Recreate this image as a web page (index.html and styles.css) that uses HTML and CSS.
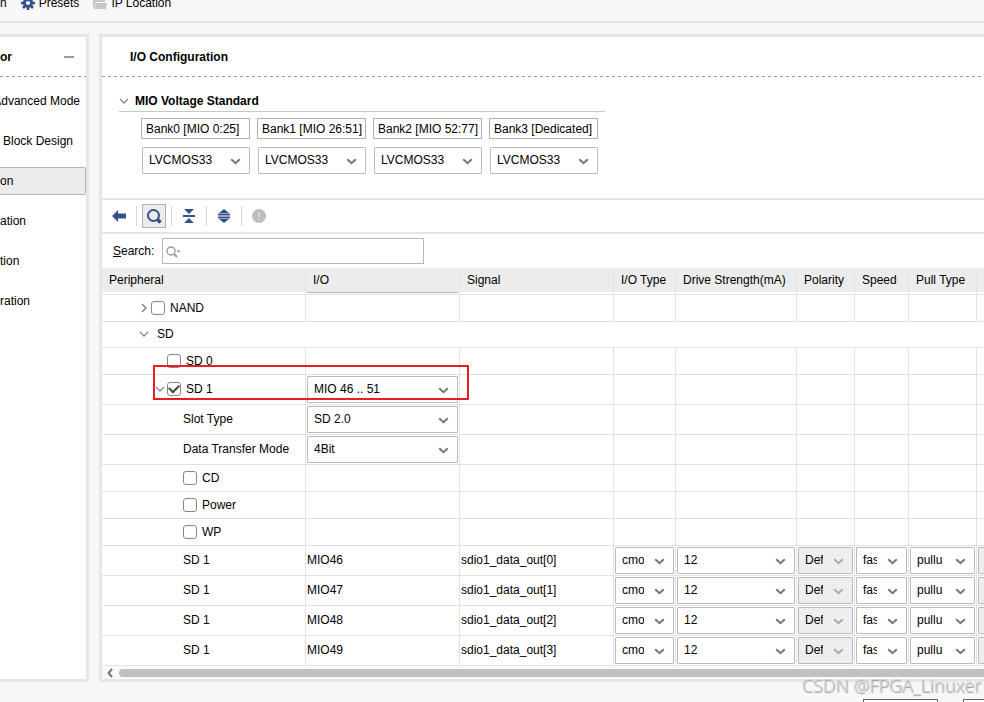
FILE: index.html
```html
<!DOCTYPE html>
<html lang="en">
<head>
    <meta charset="UTF-8">
    <meta name="viewport" content="width=device-width, initial-scale=1.0">
    <title>I/O Configuration</title>
    <link rel="stylesheet" href="styles.css">
</head>
<body>
    <svg class="symbols" aria-hidden="true">
        <symbol id="down" viewBox="0 0 10 10"><path d="M1 3l4 4 4-4" fill="none" stroke="#888" stroke-width="1.3"/></symbol>
        <symbol id="right" viewBox="0 0 10 10"><path d="M3 1l4 4-4 4" fill="none" stroke="#777" stroke-width="1.3"/></symbol>
        <symbol id="chevron" viewBox="0 0 10 7"><path d="M.7 1.2L5 5.2l4.3-4" fill="none" stroke="currentColor" stroke-width="2"/></symbol>
    </svg>

    <header class="topbar">
        <a href="#" class="top-link">n</a>
        <a href="#" class="top-link">
            <svg width="14" height="14" viewBox="0 0 14 14">
                <circle cx="7" cy="7" r="3.6" fill="none" stroke="#34518a" stroke-width="3"/>
                <path d="M7 0v3M7 11v3M0 7h3M11 7h3M2 2l2 2M10 10l2 2M2 12l2-2M10 4l2-2" stroke="#34518a" stroke-width="2.6"/>
            </svg>
            Presets
        </a>
        <a href="#" class="top-link">
            <svg width="14" height="12" viewBox="0 0 14 12">
                <path d="M0 0h5l1 2h6v3H3L1 11H0z" fill="#c6c6c6"/>
                <path d="M3.500 6H14l-1 6H1z" fill="#c6c6c6"/>
            </svg>
            IP Location
        </a>
    </header>

    <main class="workspace">
        <aside class="panel navigator">
            <div class="panel-head">
                <h2>or</h2>
                <button class="collapse" aria-label="Collapse"></button>
            </div>
            <nav class="nav-list">
                <a href="#" class="nav-item nav-end">Advanced Mode</a>
                <a href="#" class="nav-item nav-indent">Block Design</a>
                <a href="#" class="nav-item active">on</a>
                <a href="#" class="nav-item">ation</a>
                <a href="#" class="nav-item">tion</a>
                <a href="#" class="nav-item">ration</a>
            </nav>
        </aside>

        <section class="panel config">
            <div class="panel-head">
                <h1>I/O Configuration</h1>
            </div>

            <div class="voltage">
                <div class="voltage-title">
                    <button class="toggle" aria-label="Toggle section"><svg><use href="#down"/></svg></button>
                    <h2>MIO Voltage Standard</h2>
                </div>
                <div class="banks">
                    <div class="bank">
                        <label for="bank0">Bank0 [MIO 0:25]</label>
                        <span class="select"><select id="bank0"><option>LVCMOS33</option></select><svg><use href="#chevron"/></svg></span>
                    </div>
                    <div class="bank">
                        <label for="bank1">Bank1 [MIO 26:51]</label>
                        <span class="select"><select id="bank1"><option>LVCMOS33</option></select><svg><use href="#chevron"/></svg></span>
                    </div>
                    <div class="bank">
                        <label for="bank2">Bank2 [MIO 52:77]</label>
                        <span class="select"><select id="bank2"><option>LVCMOS33</option></select><svg><use href="#chevron"/></svg></span>
                    </div>
                    <div class="bank">
                        <label for="bank3">Bank3 [Dedicated]</label>
                        <span class="select"><select id="bank3"><option>LVCMOS33</option></select><svg><use href="#chevron"/></svg></span>
                    </div>
                </div>
            </div>

            <div class="toolbar">
                <button class="tool" aria-label="Back">
                    <svg width="14" height="12" viewBox="0 0 14 12"><path d="M0 6l6-6v3.500h8v5H6V12z" fill="#34518a"/></svg>
                </button>
                <span class="sep"></span>
                <button class="tool pressed" aria-label="Search">
                    <svg width="16" height="16" viewBox="0 0 16 16"><circle cx="7.500" cy="7.500" r="5.500" fill="none" stroke="#34518a" stroke-width="2"/><path d="M11.500 11.500l3 3" stroke="#34518a" stroke-width="3.500"/></svg>
                </button>
                <span class="sep"></span>
                <button class="tool" aria-label="Collapse all">
                    <svg width="12" height="14" viewBox="0 0 12 14"><path d="M1 0h10L6 5zM1 14h10L6 9zM0 6h12v2H0z" fill="#34518a"/></svg>
                </button>
                <span class="sep"></span>
                <button class="tool" aria-label="Expand all">
                    <svg width="12" height="14" viewBox="0 0 12 14"><path d="M1 4h10L6 0zM1 10h10L6 14zM0 4.500h12V6.500H0zM0 7.500h12v2H0z" fill="#34518a"/></svg>
                </button>
                <span class="sep"></span>
                <button class="tool" aria-label="Messages" disabled>
                    <svg width="14" height="14" viewBox="0 0 14 14"><circle cx="7" cy="7" r="7" fill="#bdbdbd"/><path d="M6 3h2v5H6zM6 9.500h2v2H6z" fill="#d4d4d4"/></svg>
                </button>
            </div>

            <div class="search">
                <label for="search"><u>S</u>earch:</label>
                <div class="search-box">
                    <input type="text" id="search">
                    <svg width="16" height="12" viewBox="0 0 16 12"><circle cx="5" cy="5" r="4" fill="none" stroke="#999" stroke-width="1.400"/><path d="M8 8l3 3" stroke="#999" stroke-width="2"/><path d="M10.500 4.500h4l-2 2z" fill="#888"/></svg>
                </div>
            </div>

            <div class="table-wrap">
                <table>
                    <colgroup>
                        <col class="c-peripheral">
                        <col class="c-io">
                        <col class="c-io">
                        <col class="c-type">
                        <col class="c-drive">
                        <col class="c-polarity">
                        <col class="c-speed">
                        <col class="c-pull">
                        <col>
                    </colgroup>
                    <thead>
                        <tr>
                            <th>Peripheral</th>
                            <th class="focused">I/O</th>
                            <th>Signal</th>
                            <th>I/O Type</th>
                            <th>Drive Strength(mA)</th>
                            <th>Polarity</th>
                            <th>Speed</th>
                            <th>Pull Type</th>
                            <th></th>
                        </tr>
                    </thead>
                    <tbody id="rows"></tbody>
                </table>
                <div class="highlight"></div>
            </div>

            <div class="scrollbar">
                <button aria-label="Scroll left"><svg width="6" height="10" viewBox="0 0 6 10"><path d="M5 1L1.500 5 5 9" fill="none" stroke="#777" stroke-width="2"/></svg></button>
                <div class="thumb"></div>
            </div>
        </section>
    </main>

    <footer class="actions">
        <button aria-label="OK"></button>
        <button class="edge" aria-label="Cancel"></button>
    </footer>
    <div class="watermark">CSDN @FPGA_Linuxer</div>

    <script src="script.js"></script>
</body>
</html>
```
FILE: styles.css
```css
* {
    box-sizing: border-box;
}

body {
    font-family: "Liberation Sans", Arial, sans-serif;
    font-size: 12px;
    line-height: 16px;
    background-color: #f7f7f7;
    color: #000;
    margin: 0;
    height: 100vh;
    overflow: hidden;
    position: relative;
}

h1, h2 {
    font-size: 12px;
    font-weight: bold;
    margin: 0;
}

a {
    color: inherit;
    text-decoration: none;
}

button {
    border: none;
    background: none;
    padding: 0;
}

svg {
    display: block;
    flex: none;
}

.symbols {
    position: absolute;
    width: 0;
    height: 0;
}

.topbar {
    display: flex;
    gap: 14px;
    height: 23px;
    line-height: 6px;
    border-bottom: 2px solid #e6e6e6;
    overflow: hidden;
}

.top-link {
    display: flex;
    align-items: center;
    gap: 4px;
    height: 6px;
}

.workspace {
    display: flex;
    gap: 10px;
    margin-top: 11px;
}

.panel {
    background-color: #fff;
    border: 3px solid #e6e6e6;
    overflow: hidden;
}

.navigator {
    flex: none;
    width: 89px;
    border-left: none;
}

.config {
    flex: 1;
    min-width: 0;
    border-right: none;
}

.panel-head {
    display: flex;
    align-items: center;
    justify-content: space-between;
    height: 40px;
    background: repeating-linear-gradient(90deg, #999 0, #999 3px, #fff 3px, #fff 6px) bottom / 100% 1px no-repeat;
}

.config .panel-head {
    padding-left: 28px;
}

.collapse {
    width: 10px;
    height: 2px;
    margin-right: 12px;
    background-color: #999;
}

.nav-list {
    display: flex;
    flex-direction: column;
    gap: 12px;
    padding-top: 10px;
}

.nav-item {
    display: flex;
    align-items: center;
    height: 28px;
    white-space: nowrap;
}

.nav-end {
    justify-content: flex-end;
    padding-right: 6px;
}

.nav-indent {
    padding-left: 3px;
}

.nav-item.active {
    background-color: #ececec;
    border: 1px solid #b4b4b4;
    border-left: none;
    border-radius: 0 2px 2px 0;
}

.voltage {
    padding: 15px 0 24px 17px;
}

.voltage-title {
    display: flex;
    align-items: center;
    gap: 6px;
    max-width: 486px;
    height: 20px;
    padding-bottom: 2px;
    border-bottom: 1px solid #c8c8c8;
}

.toggle svg {
    width: 10px;
    height: 10px;
}

.banks {
    display: flex;
    gap: 7px;
    padding: 6px 0 0 22px;
}

.bank {
    width: 109px;
}

.bank label {
    display: block;
    height: 21px;
    padding: 2px 0 0 4px;
    margin-bottom: 8px;
    border: 1px solid #b0b0b0;
    white-space: nowrap;
}

.bank .select {
    margin-left: 1px;
}

.select {
    display: block;
    position: relative;
}

.select select {
    appearance: none;
    display: block;
    width: 100%;
    height: 27px;
    padding: 0 29px 2px 6px;
    font: inherit;
    color: #000;
    background-color: #fff;
    border: 1px solid #bbb;
    border-radius: 1px;
}

.select select:disabled {
    background-color: #eee;
    opacity: 1;
}

.select svg {
    position: absolute;
    right: 9px;
    top: 11px;
    width: 11px;
    height: 7px;
    color: #777;
    pointer-events: none;
}

.select select:disabled + svg {
    color: #aaa;
}

.toolbar {
    display: flex;
    align-items: center;
    gap: 5px;
    height: 36px;
    padding-left: 5px;
    border: solid #e6e6e6;
    border-width: 2px 0;
}

.tool {
    display: flex;
    align-items: center;
    justify-content: center;
    width: 24px;
    height: 24px;
}

.tool.pressed {
    background-color: #ececec;
    border: 1px solid #b0b0b0;
}

.sep {
    width: 1px;
    height: 20px;
    background-color: #d8d8d8;
}

.search {
    display: flex;
    align-items: center;
    gap: 8px;
    height: 34px;
    padding-left: 11px;
}

.search-box {
    position: relative;
}

.search-box input {
    display: block;
    width: 262px;
    height: 26px;
    padding: 0 6px 0 22px;
    font: inherit;
    border: 1px solid #b8b8b8;
}

.search-box svg {
    position: absolute;
    left: 4px;
    top: 8px;
}

.table-wrap {
    position: relative;
    overflow: hidden;
}

table {
    width: 100%;
    table-layout: fixed;
    border-collapse: separate;
    border-spacing: 0;
}

.c-peripheral {
    width: 204px;
}

.c-io {
    width: 154px;
}

.c-type {
    width: 62px;
}

.c-drive {
    width: 121px;
}

.c-polarity {
    width: 58px;
}

.c-speed {
    width: 54px;
}

.c-pull {
    width: 68px;
}

th {
    height: 27px;
    padding: 0 0 2px 7px;
    font-weight: normal;
    text-align: left;
    white-space: nowrap;
    background: linear-gradient(#ececec 24px, #fff 24px);
    border: solid #e2e2e2;
    border-width: 0 1px 1px 0;
}

th:last-child,
td:last-child {
    border-right: none;
}

th.focused {
    background: linear-gradient(#b8b8b8, #b8b8b8) 1px 24px / 151px 1px no-repeat, linear-gradient(#ececec 24px, #fff 24px);
}

td {
    height: 27px;
    padding: 1px;
    white-space: nowrap;
    overflow: hidden;
    border: solid #e2e2e2;
    border-width: 0 1px 1px 0;
}

td:first-child {
    padding: 0;
}

tr.group td {
    height: 26px;
    padding-bottom: 2px;
}

tr.tall td {
    height: 30px;
}

tr.tall td.text {
    padding-top: 0;
    padding-bottom: 1px;
}

.node {
    display: flex;
    align-items: center;
}

.node label {
    display: flex;
    align-items: center;
    gap: 5px;
}

.node .toggle {
    margin-right: 2px;
}

.group .toggle {
    margin-right: 8px;
}

.level-1 {
    padding-left: 37px;
}

.level-2 {
    padding-left: 53px;
}

.level-2-leaf {
    padding-left: 65px;
}

.level-3 {
    padding-left: 81px;
}

.node input {
    appearance: none;
    display: grid;
    place-items: center;
    width: 14px;
    height: 14px;
    margin: 0;
    background-color: #fff;
    border: 1px solid #888;
    border-radius: 3px;
}

.node input:checked::after {
    content: "";
    width: 8px;
    height: 5px;
    margin-bottom: 3px;
    border: solid #444;
    border-width: 0 0 2px 2px;
    transform: rotate(-45deg);
}

.highlight {
    position: absolute;
    left: 51px;
    top: 97px;
    width: 316px;
    height: 35px;
    border: 2px solid #ed1c24;
    pointer-events: none;
}

.scrollbar {
    display: flex;
    align-items: center;
    gap: 6px;
    height: 13px;
    padding-left: 5px;
    background-color: #fafafa;
}

.thumb {
    flex: 1;
    height: 8px;
    background-color: #c0c0c0;
    border-radius: 4px 0 0 4px;
}

.actions {
    display: flex;
    justify-content: flex-end;
    gap: 25px;
    padding-top: 17px;
}

.actions button {
    width: 75px;
    height: 26px;
    background-color: #fff;
    border: 1px solid #666;
}

.actions .edge {
    width: 21px;
    border-right: none;
}

.watermark {
    position: absolute;
    right: 3px;
    bottom: 5px;
    font-family: "Noto Sans", sans-serif;
    font-size: 18px;
    line-height: 24px;
    font-weight: 300;
    color: #d2d2d2;
    text-shadow: 1px 1px 1px #999;
}
```
FILE: script.js
```js
const rows = [
    { label: 'NAND', level: 'level-1', toggle: 'right', check: true },
    { label: 'SD', level: 'level-1', toggle: 'down', group: true },
    { label: 'SD 0', level: 'level-2-leaf', check: true },
    { label: 'SD 1', level: 'level-2', toggle: 'down', check: true, checked: true, select: 'MIO 46 .. 51' },
    { label: 'Slot Type', level: 'level-3', select: 'SD 2.0' },
    { label: 'Data Transfer Mode', level: 'level-3', select: '4Bit' },
    { label: 'CD', level: 'level-3', check: true },
    { label: 'Power', level: 'level-3', check: true },
    { label: 'WP', level: 'level-3', check: true },
    { label: 'SD 1', level: 'level-3', io: 'MIO46', signal: 'sdio1_data_out[0]' },
    { label: 'SD 1', level: 'level-3', io: 'MIO47', signal: 'sdio1_data_out[1]' },
    { label: 'SD 1', level: 'level-3', io: 'MIO48', signal: 'sdio1_data_out[2]' },
    { label: 'SD 1', level: 'level-3', io: 'MIO49', signal: 'sdio1_data_out[3]' }
];

function select(value, name, disabled) {
    return `<span class="select"><select aria-label="${name}"${disabled ? ' disabled' : ''}><option>${value}</option></select><svg><use href="#chevron"/></svg></span>`;
}

function node(row) {
    const toggle = row.toggle ? `<button class="toggle" aria-label="Toggle ${row.label}"><svg><use href="#${row.toggle}"/></svg></button>` : '';
    const label = row.check
        ? `<label><input type="checkbox"${row.checked ? ' checked' : ''}>${row.label}</label>`
        : row.label;
    return `<div class="node ${row.level}">${toggle}${label}</div>`;
}

function renderRow(row) {
    if (row.group) {
        return `<tr class="group"><td colspan="9">${node(row)}</td></tr>`;
    }
    let cells = [row.io || '', row.signal || '', '', '', '', '', '', ''];
    if (row.select) {
        cells[0] = select(row.select, row.label);
    }
    if (row.signal) {
        cells = [
            row.io,
            row.signal,
            select('cmos', 'I/O Type'),
            select('12', 'Drive Strength'),
            select('Default', 'Polarity', true),
            select('fast', 'Speed'),
            select('pullu', 'Pull Type'),
            select('', 'Direction', true)
        ];
    }
    const tall = row.select || row.signal ? ' class="tall"' : '';
    const tds = cells.map(c => c.startsWith('<') ? `<td>${c}</td>` : `<td class="text">${c}</td>`);
    return `<tr${tall}><td class="text">${node(row)}</td>${tds.join('')}</tr>`;
}

document.getElementById('rows').innerHTML = rows.map(renderRow).join('');
```
